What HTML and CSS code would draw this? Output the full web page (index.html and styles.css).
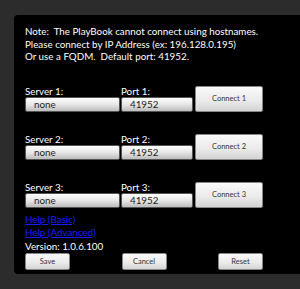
FILE: index.html
```html
<!DOCTYPE html>
<html lang="en">
<head>
    <meta charset="UTF-8">
    <title>Connection Settings</title>
    <link rel="stylesheet" href="styles.css">
</head>
<body>

<div class="settings-panel">
    <p class="note">
        Note:&nbsp; The PlayBook cannot connect using hostnames.<br>
        Please connect by IP Address (ex: 196.128.0.195)<br>
        Or use a FQDM.&nbsp; Default port: 41952.
    </p>

    <div class="server-row">
        <label class="field-label">Server 1:</label>
        <label class="field-label">Port 1:</label>
        <input type="text" class="text-field" value="none">
        <input type="text" class="text-field" value="41952">
        <button class="btn connect-btn">Connect 1</button>
    </div>

    <div class="server-row">
        <label class="field-label">Server 2:</label>
        <label class="field-label">Port 2:</label>
        <input type="text" class="text-field" value="none">
        <input type="text" class="text-field" value="41952">
        <button class="btn connect-btn">Connect 2</button>
    </div>

    <div class="server-row">
        <label class="field-label">Server 3:</label>
        <label class="field-label">Port 3:</label>
        <input type="text" class="text-field" value="none">
        <input type="text" class="text-field" value="41952">
        <button class="btn connect-btn">Connect 3</button>
    </div>

    <div class="help-links">
        <a href="#">Help (Basic)</a>
        <a href="#">Help (Advanced)</a>
    </div>

    <div class="version">Version: 1.0.6.100</div>

    <div class="actions">
        <button class="btn action-btn">Save</button>
        <button class="btn action-btn">Cancel</button>
        <button class="btn action-btn">Reset</button>
    </div>
</div>

</body>
</html>
```

FILE: styles.css
```css
html {
    background-color: #000;
    overflow: hidden;
}

body {
    background-color: #2c2c2c;
    font-family: Lato, "Liberation Sans", sans-serif;
    margin: 0;
    padding: 15px 0 0 14px;
    height: 289px;
    box-sizing: border-box;
}

.settings-panel {
    background-color: #000;
    border-radius: 4px 0 0 4px;
    height: 259px;
    padding: 10px 0 0 11px;
    box-sizing: border-box;
    color: #fff;
}

.note {
    margin: 0;
    font-size: 9.8px;
    line-height: 12.5px;
}

.server-row {
    display: grid;
    grid-template-columns: 95px 72px 69px;
    grid-template-rows: 11px 15px;
    column-gap: 1px;
    margin-top: 23px;
}

.server-row + .server-row {
    margin-top: 22px;
}

.field-label {
    font-size: 9.8px;
    line-height: 11px;
}

.text-field {
    grid-row: 2;
    height: 15px;
    box-sizing: border-box;
    border: 1px solid #555;
    border-radius: 2px;
    background: linear-gradient(#fdfdfd, #e6e6e6 50%, #bdbdbd);
    font-family: inherit;
    font-size: 9.8px;
    line-height: 13px;
    color: #222;
    padding: 0 8px;
    margin: 0;
}

.connect-btn {
    grid-column: 3;
    grid-row: 1 / 3;
    height: 26px;
    margin-left: 1px;
}

.btn {
    background: linear-gradient(#fafafa, #ebebeb 55%, #d4d4d4);
    border: 1px solid #888;
    border-radius: 2px;
    color: #333;
    font-family: inherit;
    font-size: 7.5px;
    padding: 0;
    cursor: pointer;
}

.help-links {
    display: flex;
    flex-direction: column;
    margin-top: 5px;
    font-size: 9.8px;
    line-height: 13px;
}

.help-links a {
    color: #1a1aff;
    width: max-content;
}

.version {
    font-size: 9.8px;
    line-height: 14px;
}

.actions {
    display: flex;
    justify-content: space-between;
    width: 238px;
}

.action-btn {
    width: 45px;
    height: 17px;
}
```
